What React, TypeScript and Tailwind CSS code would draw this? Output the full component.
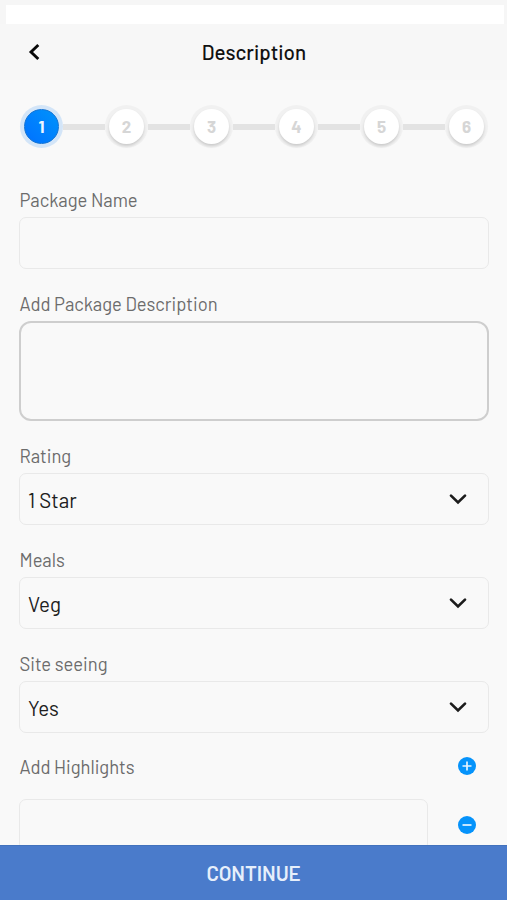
import React from "react";

function Label({ children }: { children: React.ReactNode }) {
  return <label className="block h-6 whitespace-nowrap pl-[0.5px] text-[18.4px] leading-[25px] tracking-[-0.02px] text-[#6c6c6c]">{children}</label>;
}

function Chevron() {
  return (
    <svg width="20" height="14" viewBox="0 0 20 14" fill="none" stroke="#1c1c1c" strokeWidth="2.7" strokeLinecap="round">
      <path d="M3 3.6 10 10.4 17 3.6" />
    </svg>
  );
}

function Select({ value }: { value: string }) {
  return (
    <button className="mt-[5px] flex h-[52px] w-full items-center justify-between rounded-[7px] border border-[#e9e9e9] pl-2 pr-5 text-[20.5px] text-[#202020]">
      <span className="pt-[3px]">{value}</span>
      <Chevron />
    </button>
  );
}

function RoundIcon({ plus }: { plus?: boolean }) {
  return (
    <svg width="18" height="18" viewBox="0 0 18 18" className="block">
      <circle cx="9" cy="9" r="9" fill="#0593fb" />
      <path d={plus ? "M4.5 9h9M9 4.5v9" : "M4.5 9h9"} stroke="#e6f5ff" strokeWidth="1.7" />
    </svg>
  );
}

function Steps() {
  return (
    <div className="mt-[25px] flex h-[43px] items-center pl-[20px] pr-[19px]">
      {[1, 2, 3, 4, 5, 6].map((n) => (
        <React.Fragment key={n}>
          {n > 1 && <div className="mt-px h-[6px] flex-1 bg-[#e3e3e3]" />}
          {n === 1 ? (
            <div className="flex size-[43px] shrink-0 items-center justify-center rounded-full bg-[#d3e5f8]">
              <div className="flex size-[35px] items-center justify-center rounded-full border border-[#1273d4] bg-linear-to-tr from-[#0070ff] to-[#0593fb] text-[17px] font-bold text-[#eef6ff]">1</div>
            </div>
          ) : (
            <div className="flex size-[43px] shrink-0 items-center justify-center rounded-full bg-[#f1f1f1]">
              <div className="flex size-[35px] items-center justify-center rounded-full bg-white text-[17px] font-bold text-[#d6d6d6] shadow-[0_2px_3px_rgba(0,0,0,0.16)]">{n}</div>
            </div>
          )}
        </React.Fragment>
      ))}
    </div>
  );
}

export default function App() {
  return (
    <div className="flex h-[900px] w-[507px] flex-col overflow-hidden bg-[#f9f9f9] font-['Barlow','Roboto',sans-serif]">
      <div className="h-6 shrink-0 bg-[#f6f6f6] pl-[6px] pr-[3px] pt-[5px]">
        <div className="h-full bg-white" />
      </div>
      <header className="grid h-14 shrink-0 grid-cols-[40px_1fr_40px] items-center bg-[#f7f7f7]">
        <svg className="ml-7" width="12" height="18" viewBox="0 0 12 18" fill="none" stroke="#080808" strokeWidth="2.9">
          <path d="M10.3 2 3 9l7.3 7" />
        </svg>
        <h1 className="pl-px text-center text-[20.6px] font-medium text-[#111]">Description</h1>
      </header>
      <main className="flex min-h-0 flex-1 flex-col overflow-hidden">
        <Steps />
        <form className="pl-[19px] pr-[18px] pt-10">
          <Label>Package Name</Label>
          <input className="mt-[5px] block h-[52px] w-full rounded-[7px] border border-[#e9e9e9] px-2 text-[20px] outline-none" />
          <div className="mt-[23px]">
            <Label>Add Package Description</Label>
            <textarea className="mt-[5px] block h-[100px] w-full resize-none rounded-[12px] border-2 border-[#cecece] px-2 text-[20px] outline-none" />
          </div>
          <div className="mt-[23px]">
            <Label>Rating</Label>
            <Select value="1 Star" />
          </div>
          <div className="mt-[23px]">
            <Label>Meals</Label>
            <Select value="Veg" />
          </div>
          <div className="mt-[23px]">
            <Label>Site seeing</Label>
            <Select value="Yes" />
          </div>
          <div className="mt-[22px] flex items-center justify-between pr-[13px]">
            <Label>Add Highlights</Label>
            <div className="-mt-[3px]"><RoundIcon plus /></div>
          </div>
          <div className="mt-[20px] flex items-center justify-between pr-[13px]">
            <input className="h-[52px] w-[409px] rounded-[7px] border border-[#e9e9e9] px-2 text-[20px] outline-none" />
            <RoundIcon />
          </div>
        </form>
      </main>
      <button className="h-[55px] shrink-0 border-t border-[#4272bd] bg-[#4a7bcb] pt-px text-[20.5px] font-semibold tracking-[-0.1px] text-[#e6effb]">CONTINUE</button>
    </div>
  );
}
